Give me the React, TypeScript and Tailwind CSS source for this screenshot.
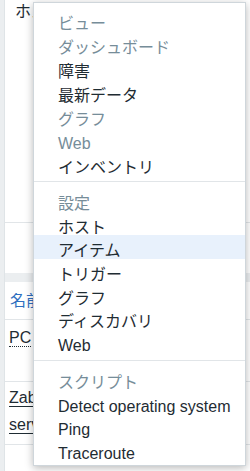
type MenuItem = { label: string; muted?: boolean; active?: boolean };

const sections: { rowH: string; items: MenuItem[] }[] = [
  {
    rowH: "h-[24px]",
    items: [
      { label: "ビュー", muted: true },
      { label: "ダッシュボード", muted: true },
      { label: "障害" },
      { label: "最新データ" },
      { label: "グラフ", muted: true },
      { label: "Web", muted: true },
      { label: "インベントリ" },
    ],
  },
  {
    rowH: "h-[23.7px]",
    items: [
      { label: "設定", muted: true },
      { label: "ホスト" },
      { label: "アイテム", active: true },
      { label: "トリガー" },
      { label: "グラフ" },
      { label: "ディスカバリ" },
      { label: "Web" },
    ],
  },
  {
    rowH: "h-[23.7px]",
    items: [
      { label: "スクリプト", muted: true },
      { label: "Detect operating system" },
      { label: "Ping" },
      { label: "Traceroute" },
    ],
  },
];

function PopupMenu() {
  return (
    <div className="absolute left-[33px] top-[2px] w-[213px] border border-[#cfd6db] bg-white shadow-[0_2px_8px_rgba(0,0,0,0.28)]">
      {sections.map((section, i) => (
        <div
          key={i}
          className={
            i === 0
              ? "pt-[5px] pb-[5px] border-b border-[#e1e5e8]"
              : i === 1
              ? "pt-[6px] pb-[6px] border-b border-[#e1e5e8]"
              : "pt-[6px] pb-[3px]"
          }
        >
          {section.items.map((item) => (
            <div
              key={item.label}
              className={`${section.rowH} pt-[8px] pl-[24px] text-[16px] leading-[16px] whitespace-nowrap ${
                item.active ? "bg-[#e8f1fc]" : ""
              } ${item.muted ? "text-[#768d99]" : "text-[#1f2c33]"}`}
            >
              {item.label}
            </div>
          ))}
        </div>
      ))}
    </div>
  );
}

export default function App() {
  return (
    <div className="relative w-[250px] h-[471px] overflow-hidden bg-[#ebeef0] text-[#1f2c33] font-['Liberation_Sans','Noto_Sans_CJK_JP',sans-serif]">
      <div className="flex h-full">
        <div className="w-[5px] border-r border-[#dfe4e7]" />
        <div className="flex-1 flex flex-col">
          {/* ホスト一覧のフィルター（メニューの下に隠れる部分は切る） */}
          <div className="h-[273px] bg-white">
            <div className="h-[223px] border-b border-[#e1e5e8] pt-[4px] pl-[10px] text-[16px] leading-[16px] whitespace-nowrap">
              <div className="w-[18px] overflow-hidden">ホスト名</div>
            </div>
          </div>
          <div className="h-[9px]" />
          {/* テーブル */}
          <div className="flex-1 bg-white">
            <div className="h-[38px] border-b border-[#e1e5e8] flex items-center pl-[5px] text-[16px] leading-[16px] text-[#2f6fc0] whitespace-nowrap">
              <div className="w-[23px] overflow-hidden">名前</div>
            </div>
            <div className="h-[62px] border-b border-[#e1e5e8] pt-[10px] pl-[4px] text-[16px] leading-[16px] whitespace-nowrap">
              <span className="border-b border-dotted border-[#1f2c33]">PC</span>
            </div>
            <div className="h-[63px] border-b border-[#e1e5e8] pt-[8px] pl-[4px] flex flex-col gap-[9px] text-[16px] leading-[16px] whitespace-nowrap">
              <div className="w-[24px] overflow-hidden pb-[2px]">
                <span className="border-b border-[#1f2c33]">Zabbix</span>
              </div>
              <div className="w-[24px] overflow-hidden pb-[2px]">
                <span className="border-b border-[#1f2c33]">server</span>
              </div>
            </div>
          </div>
        </div>
      </div>
      <PopupMenu />
    </div>
  );
}
